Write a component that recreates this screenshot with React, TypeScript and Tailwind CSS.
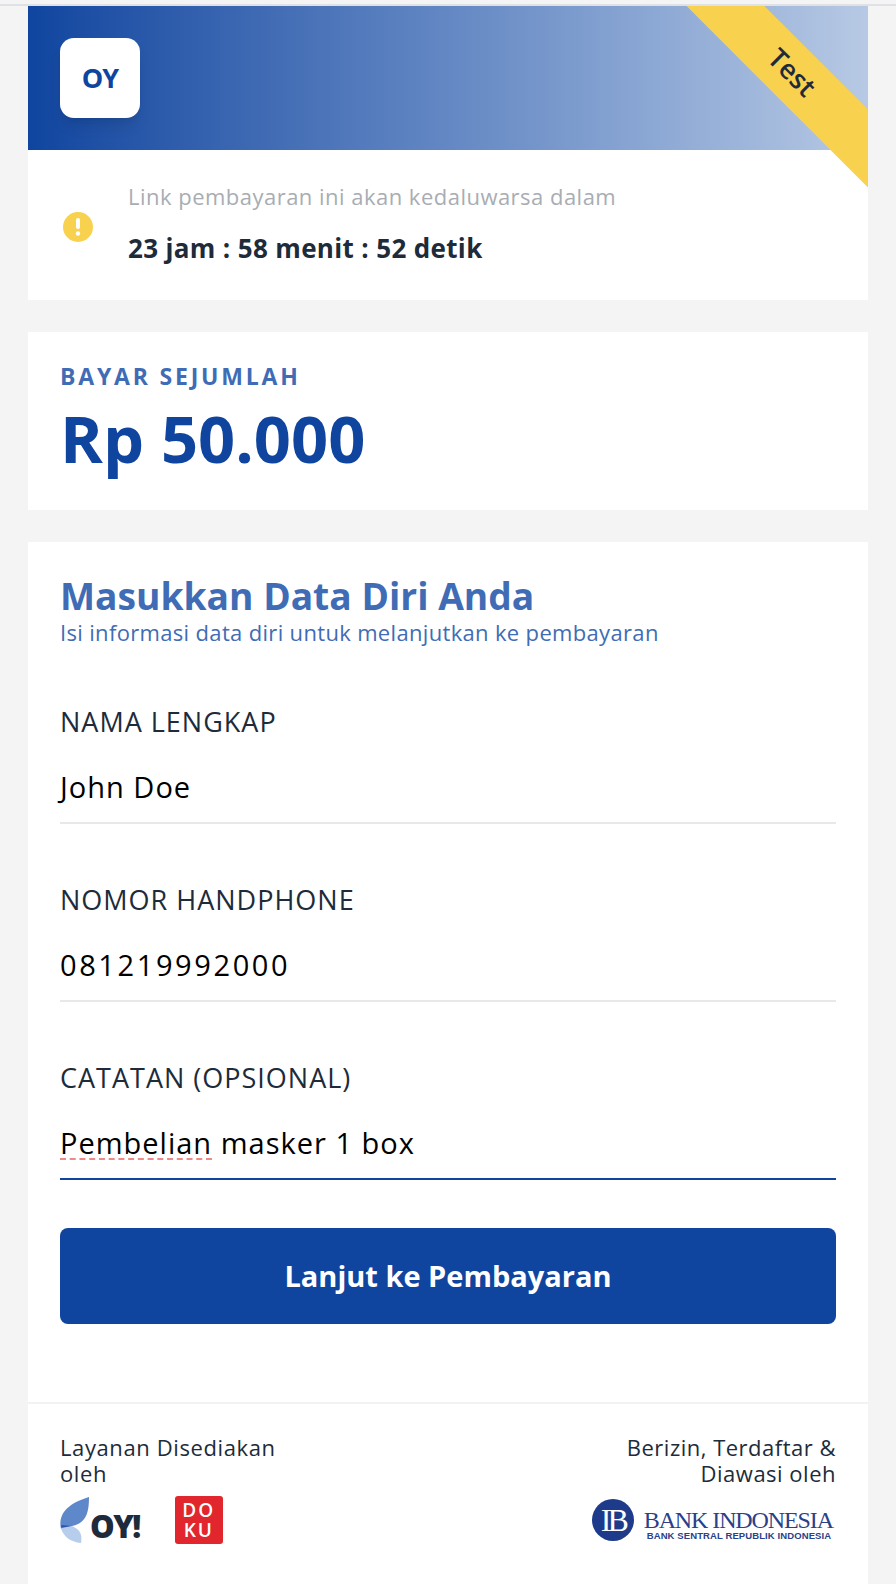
const Field = ({ label, children, active = false }: { label: string; children: React.ReactNode; active?: boolean }) => (
  <div>
    <div className="text-[27px] leading-[32px] tracking-[1px] text-[#1d2b3a]">{label}</div>
    <div
      className={`mt-[25px] h-[61px] border-b-2 pt-[6px] text-[29px] leading-[36px] tracking-[1px] text-black ${
        active ? "border-[#0f459f]" : "border-[#e6e8ea]"
      }`}
    >
      {children}
    </div>
  </div>
);

const OyLogo = () => (
  <div className="flex items-end">
    <svg width="30" height="46" viewBox="0 0 30 46">
      <path d="M29 0 C29 14 27 26 12 29 L1 32 C-2 18 6 7 29 0 Z" fill="#5f88cb" />
      <path d="M1 28 L12 29 C8 31 6 32 4 33 L2 33 Z" fill="#2a57ab" />
      <path d="M1 31 L12 29 C22 33 22 40 21 46 C10 45 3 39 1 31 Z" fill="#b7cdec" />
    </svg>
    <div className="text-[31px] font-extrabold leading-[34px] tracking-[-1.5px] text-[#1d2b3a]">OY!</div>
  </div>
);

const DokuLogo = () => (
  <div className="flex h-[48px] w-[48px] flex-col items-center justify-center rounded-[3px] bg-[#e1262e] text-white">
    <div className="text-[19px] font-semibold leading-[20px] tracking-[2px]">DO</div>
    <div className="text-[19px] font-semibold leading-[20px] tracking-[2px]">KU</div>
  </div>
);

const BankIndonesia = () => (
  <div className="mr-[3px] flex items-center">
    <div className="flex h-[42px] w-[42px] items-center justify-center rounded-full bg-[#1e3a8a] font-['Liberation_Serif',serif] text-[32px] leading-none tracking-[-4px] text-white">
      IB
    </div>
    <div className="ml-[10px] mt-[10px] flex flex-col">
      <div className="whitespace-nowrap font-['Liberation_Serif',serif] text-[24px] leading-[20px] tracking-[-1.1px] text-[#2a4189]">
        BANK INDONESIA
      </div>
      <div className="whitespace-nowrap pl-[3px] font-['Liberation_Sans',sans-serif] text-[9.5px] font-bold leading-[11px] tracking-[0.1px] text-[#2a4189]">
        BANK SENTRAL REPUBLIK INDONESIA
      </div>
    </div>
  </div>
);

export default function App() {
  return (
    <div className="h-[1584px] overflow-hidden bg-[#f4f4f4] pt-[4px] font-['Open_Sans',sans-serif]">
      <div className="h-[2px] bg-[#e0e1e4]" />
      <div className="mx-[28px] w-[840px]">
        <div className="relative bg-white">
          <div className="flex h-[144px] items-center bg-gradient-to-r from-[#0f459f] to-[#b7c9e4] px-[32px]">
            <div className="flex h-[80px] w-[80px] items-center justify-center rounded-[14px] bg-white text-[27px] font-bold tracking-[-1px] text-[#0f459f] shadow-lg">
              OY
            </div>
          </div>
          <div className="flex h-[150px] items-center pl-[33px]">
            <div className="ml-[2px] mt-[4px] flex h-[30px] w-[30px] items-center justify-center rounded-full bg-[#f8d14f]">
              <svg width="6" height="20" viewBox="0 0 6 20">
                <rect x="1" y="1" width="4" height="11" rx="2" fill="#fff" />
                <circle cx="3" cy="16.5" r="2.2" fill="#fff" />
              </svg>
            </div>
            <div className="ml-[35px] -mt-[6px]">
              <div className="text-[22px] leading-[30px] tracking-[0.48px] text-[#a8adb3]">Link pembayaran ini akan kedaluwarsa dalam</div>
              <div className="mt-[22px] text-[26px] font-bold leading-[30px] tracking-[0.35px] text-[#1d2b3a]">23 jam : 58 menit : 52 detik</div>
            </div>
          </div>
          <div className="absolute right-0 top-0 h-[182px] w-[182px] overflow-hidden">
            <div className="absolute left-[-44px] top-[39px] flex h-[55px] w-[300px] rotate-45 items-center justify-center bg-[#f8d14f] text-[27px] font-semibold text-[#1d2b3a]">
              Test
            </div>
          </div>
        </div>

        <div className="mt-[32px] h-[178px] bg-white px-[32px] pt-[28px]">
          <div className="text-[23px] font-bold leading-[32px] tracking-[2.8px] text-[#3f6cb5]">BAYAR SEJUMLAH</div>
          <div className="mt-[10px] text-[65px] font-bold leading-[72px] text-[#0f459f]">Rp 50.000</div>
        </div>

        <div className="mt-[32px] h-[1042px] bg-white">
          <div className="px-[32px] pt-[32px]">
            <div className="text-[37.2px] font-bold leading-[44px] text-[#3f6cb5]">Masukkan Data Diri Anda</div>
            <div className="text-[22px] leading-[28px] tracking-[0.33px] text-[#3f6cb5]">Isi informasi data diri untuk melanjutkan ke pembayaran</div>
            <div className="mt-[60px] flex flex-col gap-[60px]">
              <Field label="NAMA LENGKAP">John Doe</Field>
              <Field label="NOMOR HANDPHONE">
                <span className="tracking-[2.6px]">081219992000</span>
              </Field>
              <Field label="CATATAN (OPSIONAL)" active>
                <span className="underline decoration-[#f08a8a] decoration-dashed decoration-2 underline-offset-[4px]">Pembelian</span> masker 1 box
              </Field>
            </div>
            <div className="mt-[48px] flex h-[96px] items-center justify-center rounded-[8px] bg-[#0f459f] text-[29px] font-bold text-white">
              Lanjut ke Pembayaran
            </div>
          </div>
          <div className="mt-[78px] border-t-2 border-[#f2f2f2] px-[32px] pt-[30px]">
            <div className="flex justify-between">
              <div>
                <div className="w-[240px] text-[22px] leading-[26px] tracking-[0.6px] text-[#1d2b3a]">Layanan Disediakan oleh</div>
                <div className="mt-[10px] flex items-center gap-[35px]">
                  <OyLogo />
                  <DokuLogo />
                </div>
              </div>
              <div className="flex flex-col items-end">
                <div className="w-[240px] text-right text-[22px] leading-[26px] tracking-[0.5px] text-[#1d2b3a]">Berizin, Terdaftar &amp; Diawasi oleh</div>
                <div className="mt-[13px]">
                  <BankIndonesia />
                </div>
              </div>
            </div>
          </div>
        </div>
      </div>
    </div>
  );
}
